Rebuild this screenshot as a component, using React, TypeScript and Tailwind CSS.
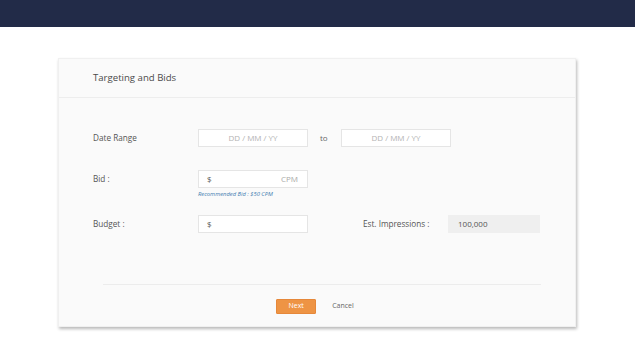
import React from "react";

export default function App() {
  const font = { fontFamily: '"Open Sans", "Liberation Sans", sans-serif' };
  return (
    <div className="w-[635px] h-[357px] bg-white overflow-hidden" style={font}>
      <div className="h-[27px] bg-[#222b48]" />
      <div className="pt-[31px] pl-[58px]">
        <div className="w-[518px] h-[269px] bg-[#fafafa] border border-[#f0f0f0] shadow-[1px_2px_3px_rgba(0,0,0,0.28)] flex flex-col">
          <div className="h-[39px] border-b border-[#ededed] flex items-center pl-[34px]">
            <span className="text-[9.6px] text-[#4a4a4a] leading-none">Targeting and Bids</span>
          </div>
          <div className="pl-[34px] pt-[31px] flex flex-col">
            <div className="flex items-center h-[18px]">
              <div className="w-[105px] text-[8.2px] text-[#555]">Date Range</div>
              <div className="w-[110px] h-[18px] bg-white border border-[#e5e5e5] flex items-center justify-center text-[8px] text-[#b3b3b3]">
                DD / MM / YY
              </div>
              <div className="w-[33px] pl-[12px] text-[8px] text-[#666]">to</div>
              <div className="w-[110px] h-[18px] bg-white border border-[#e5e5e5] flex items-center justify-center text-[8px] text-[#b3b3b3]">
                DD / MM / YY
              </div>
            </div>
            <div className="flex items-center h-[18px] mt-[23px]">
              <div className="w-[105px] text-[8.2px] text-[#555]">Bid :</div>
              <div className="w-[110px] h-[18px] bg-white border border-[#e5e5e5] flex items-center justify-between pl-[8px] pr-[9px]">
                <span className="text-[8px] text-[#555]">$</span>
                <span className="text-[8px] text-[#aaa]">CPM</span>
              </div>
            </div>
            <div className="ml-[105px] mt-[2px] text-[5.8px] leading-[8px] italic text-[#3f7cb0]">
              Recommended Bid : $50 CPM
            </div>
            <div className="flex items-center h-[18px] mt-[17px]">
              <div className="w-[105px] text-[8.2px] text-[#555]">Budget :</div>
              <div className="w-[110px] h-[18px] bg-white border border-[#e5e5e5] flex items-center pl-[8px]">
                <span className="text-[8px] text-[#555]">$</span>
              </div>
              <div className="w-[140px] pl-[55px] text-[8.2px] text-[#555]">Est. Impressions :</div>
              <div className="w-[92px] h-[18px] bg-[#efefef] flex items-center pl-[10px] text-[8px] text-[#555]">
                100,000
              </div>
            </div>
          </div>
          <div className="ml-[44px] mr-[34px] mt-[51px] h-px bg-[#ececec]" />
          <div className="flex items-center justify-center mt-[14px] pr-[4px]">
            <div className="w-[40px] h-[15px] bg-[#ee9444] border border-[#e6883a] rounded-[1px] flex items-center justify-center text-[7px] text-white">
              Next
            </div>
            <div className="ml-[16px] text-[7px] text-[#666]">Cancel</div>
          </div>
        </div>
      </div>
    </div>
  );
}
